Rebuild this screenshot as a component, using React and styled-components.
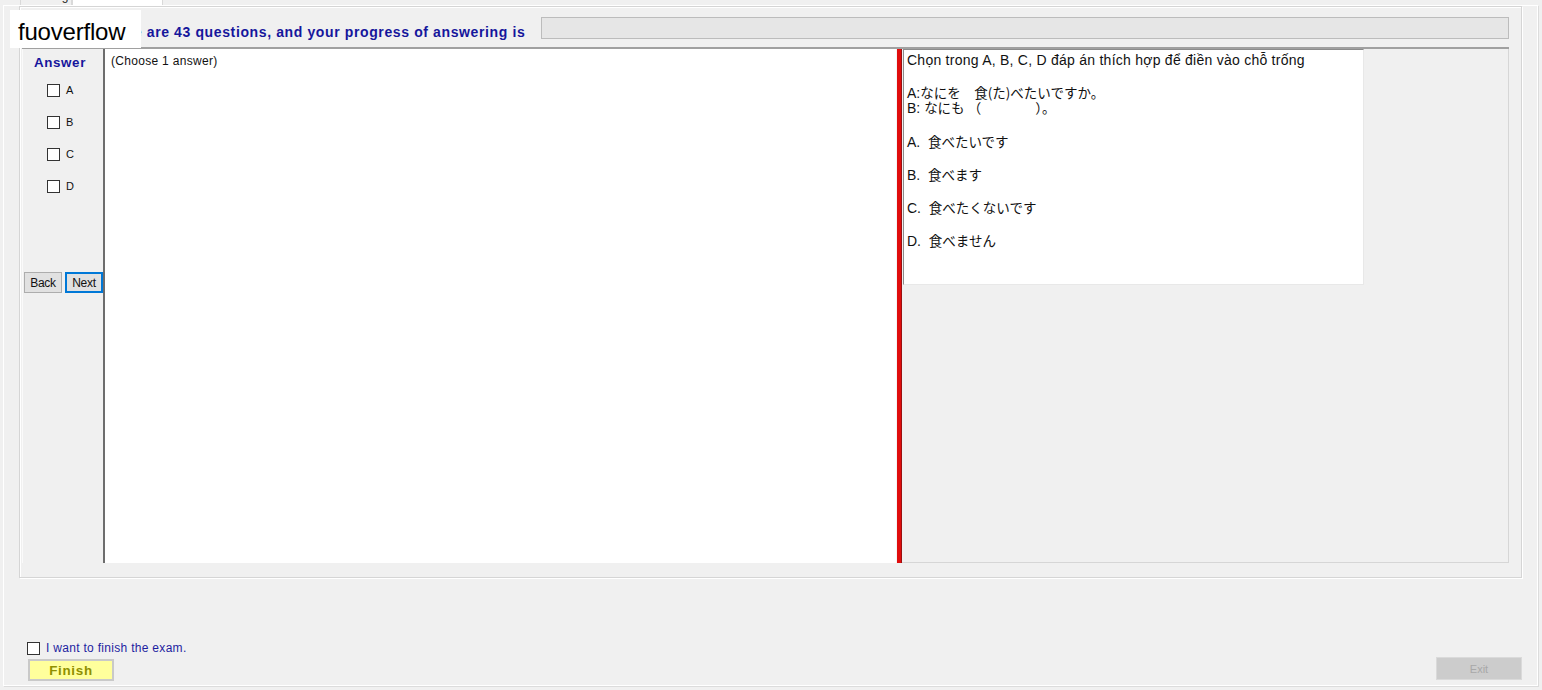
import styled, { createGlobalStyle } from 'styled-components';

const GlobalStyle = createGlobalStyle`
  html, body {
    margin: 0;
    padding: 0;
    background: #f0f0f0;
    font-family: 'Liberation Sans', Arial, 'Noto Sans CJK JP', sans-serif;
  }
  #root {
    width: 1542px;
    height: 690px;
    overflow: hidden;
  }
`;

const Page = styled.div`
  position: relative;
  width: 1542px;
  height: 690px;
  display: flex;
  flex-direction: column;
  background: #f0f0f0;
`;

const TabStrip = styled.div`
  display: flex;
  align-items: flex-end;
  height: 5px;
  padding-left: 20px;
  overflow: hidden;
`;

const Tab = styled.div`
  flex: none;
  width: ${(p) => p.width}px;
  height: 20px;
  box-sizing: border-box;
  border: 1px solid #d9d9d9;
  border-bottom: none;
  background: ${(p) => (p.active ? '#ffffff' : '#f0f0f0')};
  font-size: 12px;
  line-height: 12px;
  padding: 0 6px;
  color: #222;
  display: flex;
  align-items: flex-end;
  justify-content: center;
  span {
    margin-bottom: 3px;
  }
`;

const TabBody = styled.div`
  flex: 1;
  margin: 0 4px 4px 3px;
  border: 1px solid #ffffff;
  box-shadow: 1px 1px 0 #dcdcdc;
  display: flex;
  flex-direction: column;
  padding: 0 15px 0 15px;
`;

const GroupBox = styled.div`
  box-sizing: border-box;
  height: 572px;
  border: 1px solid #d5d5d5;
  box-shadow: inset 1px 1px 0 #ffffff, 1px 1px 0 #ffffff;
  display: flex;
  flex-direction: column;
  padding: 0 12px 14px 2px;
`;

const HeaderRow = styled.div`
  display: flex;
  align-items: flex-start;
  height: 40px;
  padding-left: 79px;
`;

const HeaderText = styled.div`
  font-size: 14px;
  font-weight: bold;
  letter-spacing: 0.62px;
  color: #16169c;
  margin-top: 17px;
  white-space: nowrap;
`;

const ProgressBar = styled.div`
  flex: 1;
  height: 22px;
  margin: 10px 0 0 16px;
  box-sizing: border-box;
  background: #e6e6e6;
  border: 1px solid #bcbcbc;
`;

const SplitArea = styled.div`
  flex: 1;
  display: flex;
  border-top: 2px solid #a0a0a0;
`;

const LeftPanel = styled.div`
  width: 81px;
  box-sizing: border-box;
  flex: none;
  display: flex;
  flex-direction: column;
  padding-top: 6px;
  border-left: 1px solid #fafafa;
`;

const AnswerLabel = styled.div`
  font-size: 13.4px;
  font-weight: bold;
  letter-spacing: 0.6px;
  color: #16169c;
  line-height: 16px;
  padding-left: 11px;
  margin-bottom: 3px;
`;

const OptionRow = styled.label`
  display: flex;
  align-items: center;
  height: 32px;
  padding-left: 24px;
  font-size: 11px;
  color: #111;
`;

const Box = styled.span`
  width: 13px;
  height: 13px;
  box-sizing: border-box;
  border: 1px solid #333;
  background: #fff;
  margin-right: 6px;
  flex: none;
`;

const NavRow = styled.div`
  display: flex;
  gap: 3px;
  margin: 70px 0 0 1px;
`;

const NavButton = styled.button`
  width: 38px;
  height: 21px;
  padding: 0;
  box-sizing: border-box;
  font-family: inherit;
  font-size: 12px;
  color: #111;
  background: #e1e1e1;
  border: ${(p) => (p.focused ? '2px solid #0078d7' : '1px solid #adadad')};
  letter-spacing: -0.3px;
`;

const AnswerArea = styled.div`
  width: 793px;
  box-sizing: border-box;
  flex: none;
  background: #ffffff;
  border-left: 2px solid #6d6d6d;
  padding: 5px 6px;
  font-size: 12px;
  letter-spacing: 0.3px;
  color: #111;
`;

const Splitter = styled.div`
  width: 6px;
  box-sizing: border-box;
  flex: none;
  background: #e00d0d;
  border-left: 1px solid #f4f4f4;
  border-right: 1px solid #9a1010;
`;

const RightPanel = styled.div`
  flex: 1;
  border-right: 1px solid #d6d6d6;
  border-bottom: 1px solid #d6d6d6;
  display: flex;
  align-items: flex-start;
  padding-left: 1px;
`;

const QuestionBox = styled.div`
  width: 461px;
  height: 236px;
  box-sizing: border-box;
  background: #ffffff;
  border-top: 1px solid #8c8c8c;
  border-left: 1px solid #8c8c8c;
  border-right: 1px solid #e8e8e8;
  border-bottom: 1px solid #e8e8e8;
  padding: 2px 3px;
  font-size: 14px;
  color: #111;
`;

const Line = styled.div`
  line-height: 15px;
  height: 15px;
  margin-top: ${(p) => p.top || 0}px;
  white-space: pre;
  letter-spacing: ${(p) => (p.wide ? '0.25px' : '0')};
`;

const Jp = styled.span`
  font-family: 'Noto Sans CJK JP', sans-serif;
  font-size: 13.5px;
  letter-spacing: 0;
`;

const Footer = styled.div`
  flex: 1;
  display: flex;
  align-items: flex-end;
  justify-content: space-between;
  padding: 0 0 4px 9px;
`;

const FinishGroup = styled.div`
  display: flex;
  flex-direction: column;
`;

const FinishCheck = styled.label`
  display: flex;
  align-items: center;
  font-size: 12px;
  color: #1e1ea0;
  margin: 0 0 4px -1px;
  letter-spacing: 0.3px;
`;

const FinishButton = styled.button`
  width: 86px;
  height: 22px;
  box-sizing: border-box;
  background: #ffff9c;
  border: 2px solid #c9c9c9;
  font-family: inherit;
  font-weight: bold;
  font-size: 13.4px;
  letter-spacing: 0.7px;
  color: #8f8f00;
  padding: 0;
`;

const ExitButton = styled.button`
  width: 86px;
  height: 23px;
  box-sizing: border-box;
  background: #cccccc;
  border: 1px solid #dadada;
  font-family: inherit;
  font-size: 11px;
  color: #a8a8a8;
  padding: 0;
  margin-bottom: 1px;
`;

const Watermark = styled.div`
  position: absolute;
  left: 10px;
  top: 10px;
  width: 131px;
  height: 38px;
  background: #ffffff;
  font-size: 24px;
  line-height: 38px;
  color: #000;
  padding: 3px 0 0 8px;
  box-sizing: border-box;
  letter-spacing: -0.2px;
`;

const options = ['A', 'B', 'C', 'D'];
const choices = [
  ['A.', '食べたいです'],
  ['B.', '食べます'],
  ['C.', '食べたくないです'],
  ['D.', '食べません'],
];

export default function App() {
  return (
    <>
      <GlobalStyle />
      <Page>
        <TabStrip>
          <Tab width={52}>
            <span>Reading</span>
          </Tab>
          <Tab width={91} active>
            <span>Grammar</span>
          </Tab>
        </TabStrip>
        <TabBody>
          <GroupBox>
            <HeaderRow>
              <HeaderText>There are 43 questions, and your progress of answering is</HeaderText>
              <ProgressBar />
            </HeaderRow>
            <SplitArea>
              <LeftPanel>
                <AnswerLabel>Answer</AnswerLabel>
                {options.map((o) => (
                  <OptionRow key={o}>
                    <Box />
                    {o}
                  </OptionRow>
                ))}
                <NavRow>
                  <NavButton type="button">Back</NavButton>
                  <NavButton type="button" focused>
                    Next
                  </NavButton>
                </NavRow>
              </LeftPanel>
              <AnswerArea>(Choose 1 answer)</AnswerArea>
              <Splitter />
              <RightPanel>
                <QuestionBox>
                  <Line top={1} wide>
                    Chọn trong A, B, C, D đáp án thích hợp để điền vào chỗ trống
                  </Line>
                  <Line top={17}>
                    A:<Jp>なにを　食(た)べたいですか。</Jp>
                  </Line>
                  <Line>
                    B: <Jp>なにも （　　　　）。</Jp>
                  </Line>
                  {choices.map(([k, v], i) => (
                    <Line key={k} top={i === 0 ? 19 : 18}>
                      {k}  <Jp>{v}</Jp>
                    </Line>
                  ))}
                </QuestionBox>
              </RightPanel>
            </SplitArea>
          </GroupBox>
          <Footer>
            <FinishGroup>
              <FinishCheck>
                <Box />I want to finish the exam.
              </FinishCheck>
              <FinishButton type="button">Finish</FinishButton>
            </FinishGroup>
            <ExitButton type="button" disabled>
              Exit
            </ExitButton>
          </Footer>
        </TabBody>
        <Watermark>fuoverflow</Watermark>
      </Page>
    </>
  );
}
